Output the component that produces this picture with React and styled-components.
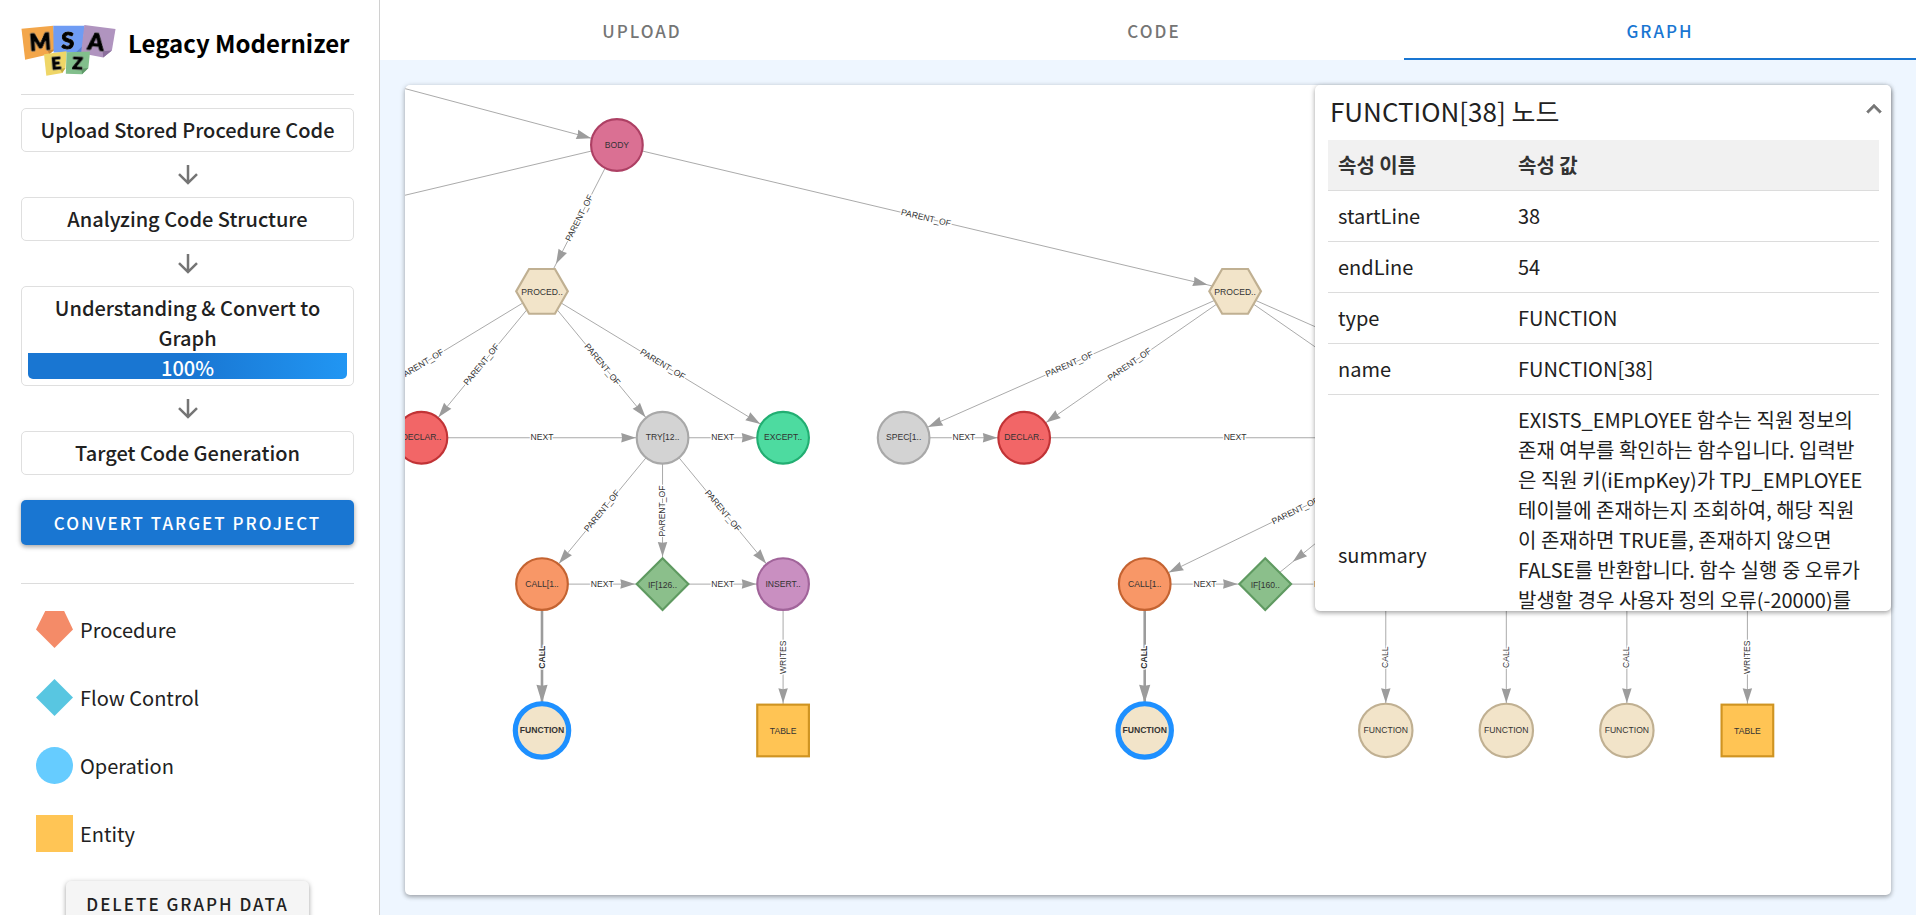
import React from "react";
import styled, { createGlobalStyle, css } from "styled-components";

const GlobalStyle = createGlobalStyle`
  *, *::before, *::after { box-sizing: border-box; }
  body {
    margin: 0;
    background: #fff;
    color: #212121;
    font-family: "Noto Sans CJK KR", "Noto Sans", sans-serif;
    font-size: 20px;
    line-height: 30px;
  }
  button { font: inherit; color: inherit; border: 0; padding: 0; background: none; cursor: pointer; }
`;

const ELEVATION = "0 2px 4px rgba(0, 0, 0, 0.26), 0 1px 6px rgba(0, 0, 0, 0.14)";

/* ---------- page ---------- */

const Page = styled.div`
  display: flex;
  height: 100vh;
  overflow: hidden;
`;

const Sidebar = styled.aside`
  flex: 0 0 380px;
  padding: 20px 25px 20px 21px;
  border-right: 1px solid #d0d0d0;
  overflow: hidden auto;
  scrollbar-width: none;
`;

const Main = styled.main`
  flex: 1;
  min-width: 0;
  display: flex;
  flex-direction: column;
  background: #eef6ff;
`;

/* ---------- sidebar ---------- */

const Brand = styled.header`
  display: flex;
  align-items: flex-start;
  gap: 12px;
  height: 75px;
  padding-top: 5px;
  border-bottom: 1px solid #dcdcdc;
`;

const BrandName = styled.h1`
  margin: 0;
  color: #000;
  font-size: 24px;
  font-weight: 600;
  line-height: 36px;
  white-space: nowrap;
`;

const LogoText = styled.text`
  font-family: Lato, "Open Sans", sans-serif;
  font-weight: 900;
  fill: #000;
  stroke: #000;
  stroke-width: 3px;
  stroke-linejoin: round;
  text-anchor: middle;
  filter: drop-shadow(0 0 2px #fff);
`;

const Steps = styled.ol`
  list-style: none;
  margin: 13px 0 25px;
  padding: 0;
`;

const Step = styled.li`
  padding: 6px;
  border: 1px solid #dfdfdf;
  border-radius: 5px;
  font-weight: 500;
  text-align: center;
`;

const StepArrow = styled.li`
  display: flex;
  align-items: center;
  justify-content: center;
  height: 45px;
  color: #757575;
`;

const Progress = styled.div`
  height: 26px;
  overflow: hidden;
  border-radius: 0 0 5px 5px;
  background: linear-gradient(to right, #1976d2 50%, #2196f3);
  color: #fff;
`;

const Button = styled.button`
  display: block;
  height: 45px;
  border-radius: 5px;
  font-size: 17px;
  font-weight: 500;
  letter-spacing: 2px;
  box-shadow: ${ELEVATION};
  ${(p) =>
    p.$primary
      ? css`
          width: 100%;
          background: #1976d2;
          color: #fff;
        `
      : css`
          margin: 29px auto 0;
          padding: 0 20px;
          background: #f5f5f5;
        `}
`;

const Legend = styled.ul`
  list-style: none;
  display: flex;
  flex-direction: column;
  gap: 31px;
  margin: 38px 0 0;
  padding: 27px 15px 0;
  border-top: 1px solid #dcdcdc;
`;

const LegendItem = styled.li`
  display: flex;
  align-items: center;
  gap: 7px;
  height: 37px;
`;

const Swatch = styled.span`
  width: 37px;
  height: 37px;
  background: ${(p) => p.$color};
  clip-path: ${(p) => p.$clip};
`;

/* ---------- tabs ---------- */

const Tabs = styled.nav`
  display: grid;
  grid-template-columns: repeat(3, 1fr);
  background: #fff;
`;

const Tab = styled.button`
  && {
    height: 60px;
    padding: 4px 0 0 ${(p) => (p.$active ? "0" : "12px")};
    border-bottom: 2px solid ${(p) => (p.$active ? "#1976d2" : "transparent")};
    color: ${(p) => (p.$active ? "#1976d2" : "#757575")};
    font-size: 17px;
    font-weight: 500;
    letter-spacing: 2px;
  }
`;

/* ---------- graph ---------- */

const GraphCard = styled.section`
  position: relative;
  flex: 1;
  margin: 25px 25px 20px;
  border-radius: 5px;
  background: #fff;
  box-shadow: ${ELEVATION};
`;

const GraphCanvas = styled.svg`
  display: block;
  position: absolute;
  inset: 0;
  width: 100%;
  height: 100%;
  border-radius: 5px;
  font-family: "Liberation Sans", Arial, sans-serif;
  font-size: 10px;
`;

const Link = styled.line`
  stroke: #9c9c9c;
  stroke-width: ${(p) => (p.$strong ? 3 : 1)};
`;

const LinkLabel = styled.text`
  fill: #333;
  stroke: #fff;
  stroke-width: 3px;
  paint-order: stroke;
  text-anchor: middle;
  font-weight: ${(p) => (p.$strong ? 700 : 400)};
`;

const NodeLabel = styled.text`
  fill: #333;
  text-anchor: middle;
  font-weight: ${(p) => (p.$strong ? 700 : 400)};
`;

/* ---------- details panel ---------- */

const Panel = styled.section`
  position: absolute;
  top: 0;
  right: 0;
  width: 576px;
  height: 526px;
  padding: 0 12px 0 13px;
  overflow: hidden;
  border-radius: 5px;
  background: #fff;
  box-shadow: ${ELEVATION};
`;

const PanelHeader = styled.header`
  display: flex;
  align-items: center;
  justify-content: space-between;
  height: 55px;
  padding-bottom: 4px;
`;

const PanelTitle = styled.h2`
  margin: 0 0 0 2px;
  font-size: 26px;
  font-weight: 400;
`;

const CollapseButton = styled.button`
  display: flex;
  width: 30px;
  height: 30px;
  margin: 0 -10px 4px 0;
  color: #757575;
`;

const Table = styled.table`
  width: 100%;
  border-collapse: separate;
  border-spacing: 0;
  table-layout: fixed;
`;

const Cell = styled.td`
  width: ${(p) => p.$width || "auto"};
  padding: 10px;
  border-bottom: 1px solid #dcdcdc;
  text-align: left;
  vertical-align: ${(p) => (p.$top ? "top" : "middle")};
`;

const HeadCell = styled(Cell).attrs({ as: "th", scope: "col" })`
  background: #f1f1f1;
  color: #333;
  font-weight: 700;
`;

const SummaryRow = styled.tr`
  height: 321px;
`;

/* ---------- drawings ---------- */

const Logo = () => (
  <svg width="95" height="51" viewBox="63 75 286 154" role="img" aria-label="MSA EZ">
    <polygon points="64,86 160,77 166,148 148,163 75,180" fill="#f3a64a" />
    <polygon points="166,148 143,152 148,163" fill="#c98636" />
    <polygon points="160,77 255,77 247,158 161,158" fill="#6f9cf4" />
    <polygon points="247,140 228,158 247,158" fill="#557fd0" />
    <polygon points="254,75 348,87 337,152 311,173 244,160" fill="#b094bf" />
    <polygon points="337,152 309,154 311,173" fill="#8b6f9c" />
    <polygon points="132,163 200,154 197,205 187,220 139,228" fill="#efd667" />
    <polygon points="197,205 180,208 187,220" fill="#c4a93f" />
    <polygon points="200,157 271,155 266,205 247,224 198,222" fill="#82bf8c" />
    <polygon points="266,205 245,207 247,224" fill="#5f9a69" />
    <LogoText x="121" y="151" fontSize="68" transform="rotate(-4 121 126)">M</LogoText>
    <LogoText x="204" y="146" fontSize="71">S</LogoText>
    <LogoText x="289" y="151" fontSize="70" transform="rotate(6 289 126)">A</LogoText>
    <LogoText x="169" y="208" fontSize="51" transform="rotate(-5 169 190)">E</LogoText>
    <LogoText x="234" y="208" fontSize="51" transform="rotate(3 234 190)">Z</LogoText>
  </svg>
);

const ArrowDown = () => (
  <svg width="30" height="30" viewBox="0 0 24 24" aria-hidden="true">
    <path
      d="M11 4h2v12l5.500-5.500 1.420 1.420L12 19.840l-7.920-7.920L5.500 10.500 11 16V4z"
      fill="currentColor"
    />
  </svg>
);

const ChevronUp = () => (
  <svg width="30" height="30" viewBox="0 0 24 24" aria-hidden="true">
    <path
      d="M7.410 15.410 12 10.830l4.590 4.580L18 14l-6-6-6 6 1.410 1.410z"
      fill="currentColor"
      stroke="currentColor"
      strokeWidth="0.4"
      strokeLinejoin="round"
    />
  </svg>
);

/* ---------- graph data ---------- */

const KINDS = {
  body: { shape: "circle", fill: "#da7093", stroke: "#ad4064", r: 30 },
  procedure: { shape: "hexagon", fill: "#f2e4c9", stroke: "#c0b092", r: 30 },
  declare: { shape: "circle", fill: "#f26667", stroke: "#c13336", r: 30 },
  plain: { shape: "circle", fill: "#d3d3d3", stroke: "#a8a8a8", r: 30 },
  exception: { shape: "circle", fill: "#4ddba0", stroke: "#22ae72", r: 30 },
  call: { shape: "circle", fill: "#f89767", stroke: "#c46331", r: 30 },
  branch: { shape: "diamond", fill: "#8bbf8b", stroke: "#5f9a61", r: 30 },
  insert: { shape: "circle", fill: "#c98fc1", stroke: "#a1649a", r: 30 },
  fn: { shape: "circle", fill: "#f2e4c9", stroke: "#c0b092", r: 31 },
  table: { shape: "square", fill: "#ffc454", stroke: "#cf9422", r: 30 },
  // An end point of a link that has no shape of its own.
  anchor: { shape: "none", r: 30 },
};

const NODES = {
  root: { x: -552, y: -170, kind: "anchor" },
  proc0: { x: -630, y: 170, kind: "anchor" },
  body: { x: 87, y: 0, kind: "body", label: "BODY" },
  proc1: { x: 0, y: 170, kind: "procedure", label: "PROCED.." },
  spec1: { x: -280, y: 340, kind: "anchor" },
  decl1: { x: -140, y: 340, kind: "declare", label: "DECLAR.." },
  try1: { x: 140, y: 340, kind: "plain", label: "TRY[12.." },
  exc1: { x: 280, y: 340, kind: "exception", label: "EXCEPT.." },
  call1: { x: 0, y: 510, kind: "call", label: "CALL[1.." },
  if1: { x: 140, y: 510, kind: "branch", label: "IF[126.." },
  insert1: { x: 280, y: 510, kind: "insert", label: "INSERT.." },
  fn1: { x: 0, y: 680, kind: "fn", label: "FUNCTION", selected: true },
  table1: { x: 280, y: 680, kind: "table", label: "TABLE" },
  proc2: { x: 805, y: 170, kind: "procedure", label: "PROCED.." },
  spec2: { x: 420, y: 340, kind: "plain", label: "SPEC[1.." },
  decl2: { x: 560, y: 340, kind: "declare", label: "DECLAR.." },
  try2: { x: 1050, y: 340, kind: "anchor" },
  exc2: { x: 1190, y: 340, kind: "anchor" },
  call2: { x: 700, y: 510, kind: "call", label: "CALL[1.." },
  if2: { x: 840, y: 510, kind: "branch", label: "IF[160.." },
  op3: { x: 980, y: 510, kind: "anchor" },
  op4: { x: 1120, y: 510, kind: "anchor" },
  op5: { x: 1260, y: 510, kind: "anchor" },
  op6: { x: 1400, y: 510, kind: "anchor" },
  fn2: { x: 700, y: 680, kind: "fn", label: "FUNCTION", selected: true },
  fn3: { x: 980, y: 680, kind: "fn", label: "FUNCTION" },
  fn4: { x: 1120, y: 680, kind: "fn", label: "FUNCTION" },
  fn5: { x: 1260, y: 680, kind: "fn", label: "FUNCTION" },
  table2: { x: 1400, y: 680, kind: "table", label: "TABLE" },
};

const LINKS = [
  ["root", "body"],
  ["body", "proc0"],
  ["body", "proc1", "PARENT_OF"],
  ["body", "proc2", "PARENT_OF"],
  ["proc1", "spec1", "PARENT_OF"],
  ["proc1", "decl1", "PARENT_OF"],
  ["proc1", "try1", "PARENT_OF"],
  ["proc1", "exc1", "PARENT_OF"],
  ["decl1", "try1", "NEXT"],
  ["try1", "exc1", "NEXT"],
  ["try1", "call1", "PARENT_OF"],
  ["try1", "if1", "PARENT_OF"],
  ["try1", "insert1", "PARENT_OF"],
  ["call1", "if1", "NEXT"],
  ["if1", "insert1", "NEXT"],
  ["call1", "fn1", "CALL", true],
  ["insert1", "table1", "WRITES"],
  ["proc2", "spec2", "PARENT_OF"],
  ["proc2", "decl2", "PARENT_OF"],
  ["proc2", "try2"],
  ["proc2", "exc2"],
  ["spec2", "decl2", "NEXT"],
  ["decl2", "try2", "NEXT"],
  ["try2", "call2", "PARENT_OF"],
  ["try2", "if2"],
  ["call2", "if2", "NEXT"],
  ["if2", "op3", "NEXT"],
  ["call2", "fn2", "CALL", true],
  ["op3", "fn3", "CALL"],
  ["op4", "fn4", "CALL"],
  ["op5", "fn5", "CALL"],
  ["op6", "table2", "WRITES"],
];

function GraphLink({ from, to, label, strong }) {
  const a = NODES[from];
  const b = NODES[to];
  const dx = b.x - a.x;
  const dy = b.y - a.y;
  const length = Math.hypot(dx, dy);
  const { shape, r } = KINDS[b.kind];
  const reach =
    shape === "circle" ? r + 1 : ((r + 2) * length) / Math.max(Math.abs(dx), Math.abs(dy));
  const tipX = b.x - (dx / length) * reach;
  const tipY = b.y - (dy / length) * reach;
  const angle = (Math.atan2(dy, dx) * 180) / Math.PI;
  const textAngle = angle >= 90 ? angle - 180 : angle <= -90 ? angle + 180 : angle;
  const midX = (a.x + b.x) / 2;
  const midY = (a.y + b.y) / 2;
  const head = strong ? "0,0 -21,-6.5 -20,0 -21,6.5" : "0,0 -17,-5.5 -16,0 -17,5.5";
  return (
    <g>
      <Link x1={a.x} y1={a.y} x2={b.x} y2={b.y} $strong={strong} />
      <polygon
        points={head}
        fill="#9c9c9c"
        transform={`translate(${tipX} ${tipY}) rotate(${angle})`}
      />
      {label && (
        <LinkLabel $strong={strong} y="3" transform={`translate(${midX} ${midY}) rotate(${textAngle})`}>
          {label}
        </LinkLabel>
      )}
    </g>
  );
}

function GraphNode({ x, y, kind, label, selected }) {
  const { shape, fill, stroke, r } = KINDS[kind];
  if (shape === "none") return null;
  const paint = {
    fill,
    stroke: selected ? "#1e90ff" : stroke,
    strokeWidth: selected ? 6 : 2.5,
  };
  return (
    <g transform={`translate(${x} ${y})`}>
      {shape === "circle" && <circle r={r} {...paint} />}
      {shape === "square" && <rect x={-r} y={-r} width={2 * r} height={2 * r} {...paint} />}
      {shape === "diamond" && <polygon points="0,-30 30,0 0,30 -30,0" {...paint} />}
      {shape === "hexagon" && (
        <polygon points="-30,0 -15,-26 15,-26 30,0 15,26 -15,26" {...paint} />
      )}
      <NodeLabel y={shape === "circle" ? 3 : 4} $strong={selected}>
        {label}
      </NodeLabel>
    </g>
  );
}

const Graph = () => (
  <GraphCanvas role="img" aria-label="Graph">
    <g transform="translate(137 60) scale(0.861)">
      {LINKS.map(([from, to, label, strong]) => (
        <GraphLink key={from + to} from={from} to={to} label={label} strong={strong} />
      ))}
      {Object.entries(NODES).map(([id, node]) => (
        <GraphNode key={id} {...node} />
      ))}
    </g>
  </GraphCanvas>
);

/* ---------- content ---------- */

const LEGEND = [
  { name: "Procedure", color: "#f48b68", clip: "polygon(25% 0, 76% 0, 100% 50%, 50% 100%, 0 50%)" },
  { name: "Flow Control", color: "#58c6e1", clip: "polygon(50% 0, 100% 50%, 50% 100%, 0 50%)" },
  { name: "Operation", color: "#66ccff", clip: "circle(50%)" },
  { name: "Entity", color: "#ffc555", clip: "none" },
];

const PROPERTIES = [
  ["startLine", "38"],
  ["endLine", "54"],
  ["type", "FUNCTION"],
  ["name", "FUNCTION[38]"],
];

const SUMMARY =
  "EXISTS_EMPLOYEE 함수는 직원 정보의 존재 여부를 확인하는 함수입니다. 입력받은 직원 키(iEmpKey)가 TPJ_EMPLOYEE 테이블에 존재하는지 조회하여, 해당 직원이 존재하면 TRUE를, 존재하지 않으면 FALSE를 반환합니다. 함수 실행 중 오류가 발생할 경우 사용자 정의 오류(-20000)를";

export default function App() {
  return (
    <>
      <GlobalStyle />
      <Page>
        <Sidebar>
          <Brand>
            <Logo />
            <BrandName>Legacy Modernizer</BrandName>
          </Brand>
          <Steps>
            <Step>Upload Stored Procedure Code</Step>
            <StepArrow><ArrowDown /></StepArrow>
            <Step>Analyzing Code Structure</Step>
            <StepArrow><ArrowDown /></StepArrow>
            <Step>
              Understanding &amp; Convert to Graph
              <Progress>100%</Progress>
            </Step>
            <StepArrow><ArrowDown /></StepArrow>
            <Step>Target Code Generation</Step>
          </Steps>
          <Button type="button" $primary>CONVERT TARGET PROJECT</Button>
          <Legend>
            {LEGEND.map((item) => (
              <LegendItem key={item.name}>
                <Swatch $color={item.color} $clip={item.clip} />
                {item.name}
              </LegendItem>
            ))}
          </Legend>
          <Button type="button">DELETE GRAPH DATA</Button>
        </Sidebar>
        <Main>
          <Tabs role="tablist">
            <Tab type="button" role="tab" aria-selected="false">UPLOAD</Tab>
            <Tab type="button" role="tab" aria-selected="false">CODE</Tab>
            <Tab type="button" role="tab" aria-selected="true" $active>GRAPH</Tab>
          </Tabs>
          <GraphCard>
            <Graph />
            <Panel>
              <PanelHeader>
                <PanelTitle>FUNCTION[38] 노드</PanelTitle>
                <CollapseButton type="button" aria-label="Collapse"><ChevronUp /></CollapseButton>
              </PanelHeader>
              <Table>
                <thead>
                  <tr>
                    <HeadCell $width="180px">속성 이름</HeadCell>
                    <HeadCell>속성 값</HeadCell>
                  </tr>
                </thead>
                <tbody>
                  {PROPERTIES.map(([name, value]) => (
                    <tr key={name}>
                      <Cell>{name}</Cell>
                      <Cell>{value}</Cell>
                    </tr>
                  ))}
                  <SummaryRow>
                    <Cell>summary</Cell>
                    <Cell $top>{SUMMARY}</Cell>
                  </SummaryRow>
                </tbody>
              </Table>
            </Panel>
          </GraphCard>
        </Main>
      </Page>
    </>
  );
}
